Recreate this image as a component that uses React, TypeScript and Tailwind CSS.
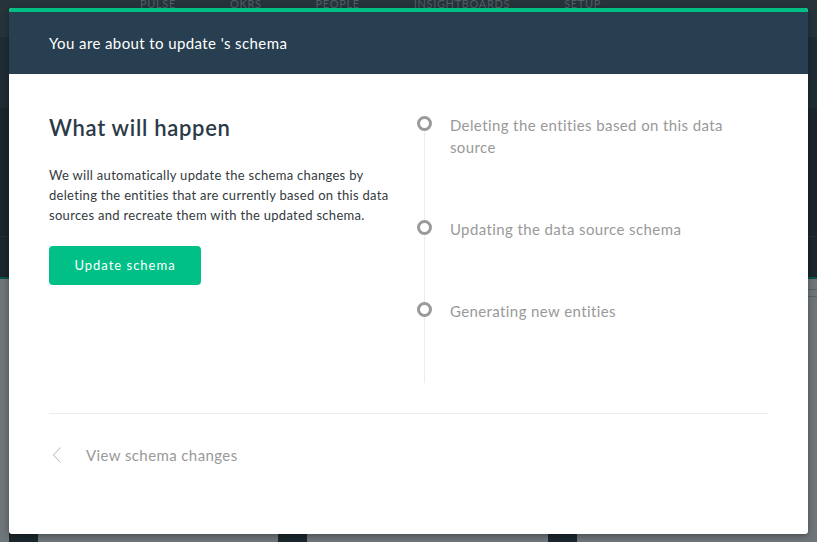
import React from 'react';

const navItems = ['PULSE', 'OKRS', 'PEOPLE', 'INSIGHTBOARDS', 'SETUP'];

const steps = [
  'Deleting the entities based on this data source',
  'Updating the data source schema',
  'Generating new entities',
];

const StepDot = () => (
  <span className="relative z-10 mt-[2px] block h-[15px] w-[15px] shrink-0 rounded-full border-[3px] border-[#9a9a9a] bg-white" />
);

const App = () => {
  return (
    <div className="relative h-[542px] w-[817px] overflow-hidden bg-[#6f7679] font-['Lato','Liberation_Sans',sans-serif]">
      {/* dimmed app behind the modal */}
      <div className="flex h-[37px] items-start gap-[54px] bg-[#26333b] pl-[140px] text-[11px] tracking-[0.06em] text-[#4f5d65]">
        {navItems.map((item) => (
          <span key={item} className="-mt-[4px]">
            {item}
          </span>
        ))}
      </div>
      <div className="h-[71px] bg-[#1f2c33]" />
      <div className="h-[128px] bg-[#1b262c]" />
      <div className="h-[41px] border-t border-[#222f36] bg-[#1b272d]" />
      <div className="h-[2px] bg-[#0c5246]" />
      <div className="flex justify-end pt-[10px]">
        <div className="flex w-[9px] flex-col gap-[6px]">
          <span className="h-[1px] bg-[#59636a]" />
          <span className="h-[1px] bg-[#59636a]" />
        </div>
      </div>
      <div className="mt-[225px] flex pl-[9px]">
        {[0, 1, 2].map((i) => (
          <div key={i} className="w-[275px]">
            <div className="h-[30px] w-[29px] bg-[#1b272d]" />
          </div>
        ))}
      </div>

      {/* modal */}
      <div className="absolute left-[9px] top-[8px] flex h-[526px] w-[799px] flex-col overflow-hidden rounded-[3px] bg-white shadow-[0_2px_6px_rgba(0,0,0,0.35)]">
        <div className="h-[4px] bg-[#00bf84]" />
        <div className="flex h-[62px] items-center bg-[#273f50] px-[40px] text-[15px] tracking-[0.4px] text-white">
          You are about to update 's schema
        </div>

        <div className="flex flex-1 flex-col px-[40px]">
          <div className="flex pt-[40px]">
            <div className="w-[372px]">
              <h2 className="text-[22px] font-semibold leading-[28px] tracking-[0.7px] text-[#2b3a47]">What will happen</h2>
              <p className="mt-[23px] w-[340px] text-[13px] leading-[20px] tracking-[0.3px] text-[#333a40]">
                We will automatically update the schema changes by deleting the entities that are currently based on this data
                sources and recreate them with the updated schema.
              </p>
              <button className="mt-[21px] h-[39px] w-[152px] rounded-[4px] bg-[#00bf87] text-[13px] tracking-[1px] text-white">
                Update schema
              </button>
            </div>

            <div className="relative w-[355px]">
              <span className="absolute bottom-0 left-[7px] top-[8px] w-[1px] bg-[#ececec]" />
              <div className="flex flex-col gap-[60px]">
                {steps.map((step) => (
                  <div key={step} className="flex items-start gap-[18px]">
                    <StepDot />
                    <span className="w-[300px] text-[15px] leading-[22px] tracking-[0.4px] text-[#999999]">{step}</span>
                  </div>
                ))}
              </div>
              <div className="h-[61px]" />
            </div>
          </div>

          <div className="mt-[30px] h-[1px] bg-[#ececec]" />

          <div className="flex items-center gap-[24px] pt-[30px] text-[15px] tracking-[0.4px] text-[#999999]">
            <svg width="10" height="16" viewBox="0 0 10 16" className="ml-[3px]">
              <path d="M8.5 0.5 L1.5 8 L8.5 15.5" fill="none" stroke="#b5b5b5" strokeWidth="1" />
            </svg>
            <span>View schema changes</span>
          </div>
        </div>
      </div>
    </div>
  );
};

export default App;
